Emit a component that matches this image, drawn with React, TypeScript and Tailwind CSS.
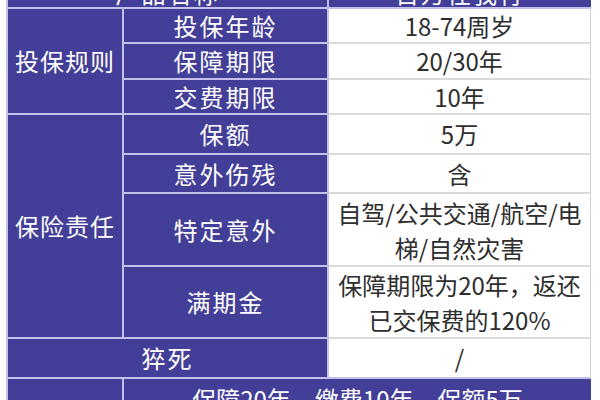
const purple = "bg-[#433e97] text-white";
const whiteCell = "bg-white text-[#2e2e2e] border-r border-[#d2d2d2]";

export default function App() {
  return (
    <div className="h-[400px] w-[600px] overflow-hidden bg-white pl-[6px] font-['Noto_Sans_CJK_SC','Noto_Sans',sans-serif]">
      <div className="-mt-[21px] grid w-[585px] grid-cols-[114px_203px_262px] grid-rows-[28px_33px_34px_33px_38px_37px_71px_70px_38px_40px] gap-[2px] bg-[#c3c0ec] pl-[2px] text-[24px] leading-none">
        {/* header */}
        <div className={`col-span-2 flex items-center justify-center tracking-[2px] ${purple}`}>产品名称</div>
        <div className={`flex items-center justify-center tracking-[2px] ${purple}`}>百万任我行</div>

        {/* grey backing for the white column lines */}
        <div className="col-start-3 row-start-2 row-end-10 bg-[#dadada]" />

        {/* 投保规则 */}
        <div className={`col-start-1 row-start-2 row-span-3 flex items-center justify-center tracking-[1px] ${purple}`}>投保规则</div>
        <div className={`col-start-2 row-start-2 flex items-center justify-center tracking-[2px] ${purple}`}>投保年龄</div>
        <div className={`col-start-3 row-start-2 flex items-center justify-center ${whiteCell}`}>18-74周岁</div>
        <div className={`col-start-2 row-start-3 flex items-center justify-center tracking-[2px] ${purple}`}>保障期限</div>
        <div className={`col-start-3 row-start-3 flex items-center justify-center ${whiteCell}`}>20/30年</div>
        <div className={`col-start-2 row-start-4 flex items-center justify-center tracking-[2px] ${purple}`}>交费期限</div>
        <div className={`col-start-3 row-start-4 flex items-center justify-center ${whiteCell}`}>10年</div>

        {/* 保险责任 */}
        <div className={`col-start-1 row-start-5 row-span-4 flex items-center justify-center tracking-[1px] ${purple}`}>保险责任</div>
        <div className={`col-start-2 row-start-5 flex items-center justify-center tracking-[2px] ${purple}`}>保额</div>
        <div className={`col-start-3 row-start-5 flex items-center justify-center ${whiteCell}`}>5万</div>
        <div className={`col-start-2 row-start-6 flex items-center justify-center tracking-[2px] ${purple}`}>意外伤残</div>
        <div className={`col-start-3 row-start-6 flex items-center justify-center ${whiteCell}`}>含</div>
        <div className={`col-start-2 row-start-7 flex items-center justify-center tracking-[2px] ${purple}`}>特定意外</div>
        <div className={`col-start-3 row-start-7 flex items-center justify-center text-center leading-[35px] ${whiteCell}`}>
          <span>
            自驾/公共交通/航空/电
            <br />
            梯/自然灾害
          </span>
        </div>
        <div className={`col-start-2 row-start-8 flex items-center justify-center tracking-[2px] ${purple}`}>满期金</div>
        <div className={`col-start-3 row-start-8 flex items-center justify-center text-center leading-[35px] ${whiteCell}`}>
          <span>
            保障期限为20年，返还
            <br />
            已交保费的120%
          </span>
        </div>

        {/* 猝死 */}
        <div className={`col-start-1 col-span-2 row-start-9 flex items-center justify-center tracking-[2px] ${purple}`}>猝死</div>
        <div className={`col-start-3 row-start-9 flex items-center justify-center ${whiteCell}`}>/</div>

        {/* last row */}
        <div className={`col-start-1 row-start-10 ${purple}`} />
        <div className={`col-start-2 col-span-2 row-start-10 flex items-center justify-center ${purple}`}>保障20年，缴费10年，保额5万</div>
      </div>
    </div>
  );
}
